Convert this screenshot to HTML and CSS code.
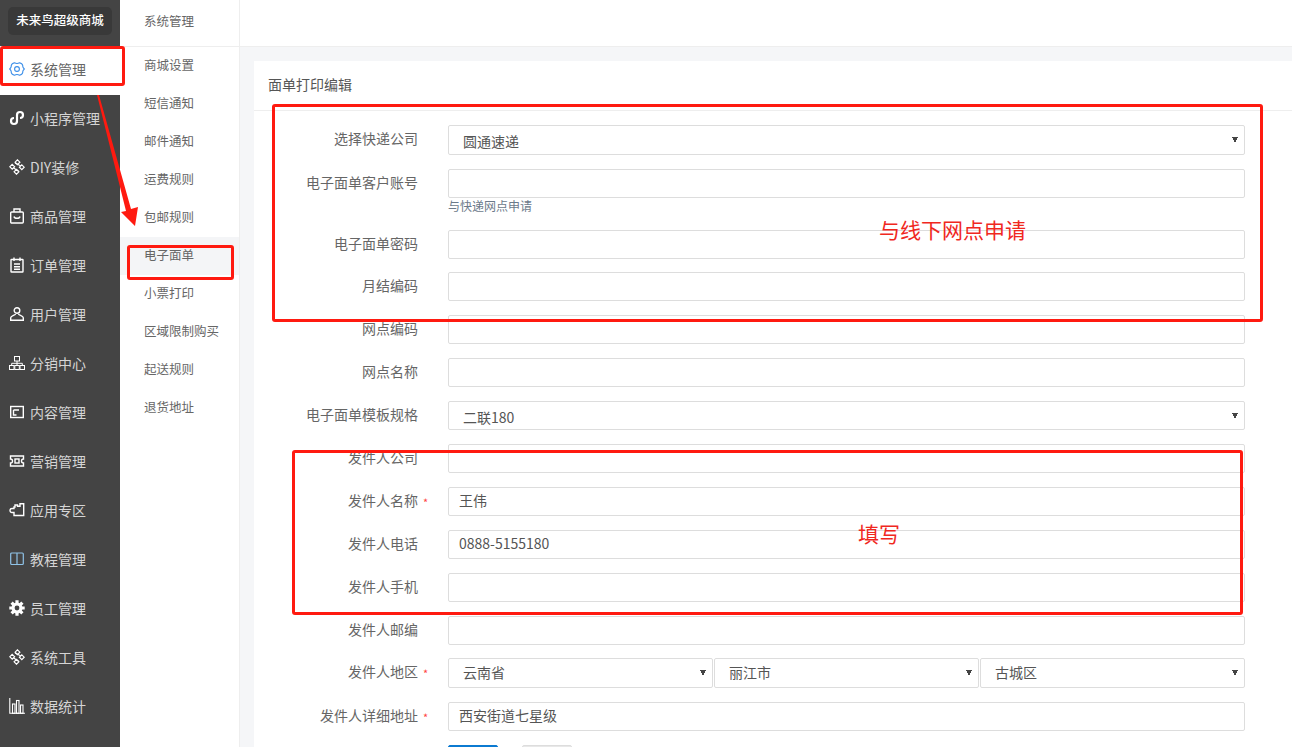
FILE: index.html
```html
<!DOCTYPE html>
<html lang="zh">
<head>
<meta charset="utf-8">
<title>面单打印编辑</title>
<link rel="stylesheet" href="styles.css">
</head>
<body>
<div class="app">
  <aside class="primary">
    <div class="logo-wrap"><div class="logo">未来鸟超级商城</div></div>
    <nav class="primary-nav">
      <a class="pitem active"><svg class="ico" viewBox="0 0 16 16"><g fill="none" stroke="#3b8ee8" stroke-width="1.100" stroke-linejoin="round"><path d="M5.500 1.800Q8 3.200 10.500 1.800 13.500 2.500 13.800 4.800 13.400 6 15.300 8 13.400 10 13.800 11.200 13.500 13.500 10.500 14.200 8 12.800 5.500 14.200 2.500 13.500 2.200 11.200 2.600 10 .7 8 2.600 6 2.200 4.800 2.500 2.500 5.500 1.800z"/><circle cx="8" cy="8" r="2.400"/></g></svg>系统管理</a>
      <a class="pitem"><svg class="ico" viewBox="0 0 16 16"><path d="M8 5v6a3 3 0 1 1-3-3M8 5a3 3 0 1 1 3 3" fill="none" stroke="#fff" stroke-width="2.200"/></svg>小程序管理</a>
      <a class="pitem"><svg class="ico" viewBox="0 0 16 16"><g fill="none" stroke="#fff" stroke-width="1.200"><path d="M8.500 .8l2.400 2.400-2.400 2.400-2.400-2.400z"/><path d="M3.200 5.300L5.600 7.700 3.200 10.100 .8 7.700z"/><path d="M12.800 5.800L15.200 8.200 12.800 10.600 10.400 8.200z"/><path d="M7.500 10.400l2.400 2.400-2.400 2.400-2.400-2.400z"/><path d="M6 4l6 3M4.500 9l5 3"/></g></svg>DIY装修</a>
      <a class="pitem"><svg class="ico" viewBox="0 0 16 16"><g fill="none" stroke="#fff" stroke-width="1.400"><rect x="1.700" y="4" width="12.600" height="11" rx="1"/><path d="M5 4V1h6V4M5 8.500c.5 2.300 5.500 2.300 6 0"/></g></svg>商品管理</a>
      <a class="pitem"><svg class="ico" viewBox="0 0 16 16"><g fill="none" stroke="#fff" stroke-width="1.400"><rect x="2" y="2.500" width="12" height="12.500" rx=".5"/><path d="M5 .5v3.500M11 .5v3.500M5 7h6M5 9.700h6M5 12.300h6"/></g></svg>订单管理</a>
      <a class="pitem"><svg class="ico" viewBox="0 0 16 16"><g fill="none" stroke="#fff" stroke-width="1.400"><circle cx="8" cy="4.500" r="2.800"/><path d="M6.500 8c0 1.300-4.800 1.700-4.800 3.700v2.600h12.600v-2.600C14.300 9.700 9.500 9.300 9.500 8"/></g></svg>用户管理</a>
      <a class="pitem"><svg class="ico" viewBox="0 0 16 16"><g fill="none" stroke="#fff" stroke-width="1"><rect x="5.500" y="1.500" width="5" height="4.500"/><rect x=".5" y="10.500" width="4.500" height="4"/><rect x="5.800" y="10.500" width="4.500" height="4"/><rect x="11" y="10.500" width="4.500" height="4"/><path d="M2.700 10.500V8.300h10.600v2.200M8 6v4.500"/></g></svg>分销中心</a>
      <a class="pitem"><svg class="ico" viewBox="0 0 16 16"><g fill="none" stroke="#fff" stroke-width="1.400"><rect x="1.700" y="2.500" width="12.600" height="11"/><path d="M4.500 6H10M4.500 6v5h3"/></g></svg>内容管理</a>
      <a class="pitem"><svg class="ico" viewBox="0 0 16 16"><g fill="none" stroke="#fff" stroke-width="1.400"><path d="M1.500 3h13v3c-1.600 0-2 1-2 2s.4 2 2 2v3h-13v-3c1.600 0 2-1 2-2s-.4-2-2-2z"/><rect x="6" y="6" width="4" height="4"/></g></svg>营销管理</a>
      <a class="pitem"><svg class="ico" viewBox="0 0 16 16"><path d="M6 5V3h2.500v1.200H11V1.800h3.700V13.500H5v-3H3a1.800 1.800 0 0 1 0-4h2V5z" fill="none" stroke="#fff" stroke-width="1.400"/></svg>应用专区</a>
      <a class="pitem"><svg class="ico" viewBox="0 0 16 16"><g fill="none" stroke="#8fc3e8" stroke-width="1.200"><rect x="1.700" y="2" width="12.600" height="11.500" rx="1"/><path d="M8 2v11.500"/></g></svg>教程管理</a>
      <a class="pitem"><svg class="ico" viewBox="0 0 16 16"><g stroke="#fff" stroke-width="3.200"><path d="M8 .3v15.400M.3 8h15.400M2.600 2.600l10.800 10.800M13.400 2.600L2.600 13.400"/></g><circle cx="8" cy="8" r="5.500" fill="#fff"/><circle cx="8" cy="8" r="2.400" fill="#444"/></svg>员工管理</a>
      <a class="pitem"><svg class="ico" viewBox="0 0 16 16"><g fill="none" stroke="#fff" stroke-width="1.200"><path d="M8.500 .8l2.400 2.400-2.400 2.400-2.400-2.400z"/><path d="M3.200 5.300L5.600 7.700 3.200 10.100 .8 7.700z"/><path d="M12.800 5.800L15.200 8.200 12.800 10.600 10.400 8.200z"/><path d="M7.500 10.400l2.400 2.400-2.400 2.400-2.400-2.400z"/><path d="M6 4l6 3M4.500 9l5 3"/></g></svg>系统工具</a>
      <a class="pitem"><svg class="ico" viewBox="0 0 16 16"><g fill="none" stroke="#fff" stroke-width="1.100"><path d="M.8 0v15.300H16"/><rect x="3.500" y="6" width="2.500" height="9.300"/><rect x="7.500" y="2.500" width="2.500" height="12.800"/><rect x="11.500" y="7" width="2.500" height="8.300"/></g></svg>数据统计</a>
    </nav>
  </aside>
  <aside class="secondary">
    <div class="sec-head">系统管理</div>
    <nav class="sec-nav">
      <a class="sitem">商城设置</a>
      <a class="sitem">短信通知</a>
      <a class="sitem">邮件通知</a>
      <a class="sitem">运费规则</a>
      <a class="sitem">包邮规则</a>
      <a class="sitem current">电子面单</a>
      <a class="sitem">小票打印</a>
      <a class="sitem">区域限制购买</a>
      <a class="sitem">起送规则</a>
      <a class="sitem">退货地址</a>
    </nav>
  </aside>
  <main class="main">
    <div class="topbar"></div>
    <div class="content">
      <section class="card">
        <h1 class="card-title">面单打印编辑</h1>
        <form class="form">
          <div class="row"><label class="lbl">选择快递公司</label><span></span><select class="ctl sel sel-tall"><option>圆通速递</option></select></div>
          <div class="row"><label class="lbl">电子面单客户账号</label><span></span><div class="stack"><input class="ctl" type="text"><div class="help">与快递网点申请</div></div></div>
          <div class="row row-tight"><label class="lbl">电子面单密码</label><span></span><input class="ctl" type="text"></div>
          <div class="row"><label class="lbl">月结编码</label><span></span><input class="ctl" type="text"></div>
          <div class="row"><label class="lbl">网点编码</label><span></span><input class="ctl" type="text"></div>
          <div class="row"><label class="lbl">网点名称</label><span></span><input class="ctl" type="text"></div>
          <div class="row"><label class="lbl">电子面单模板规格</label><span></span><select class="ctl sel"><option>二联180</option></select></div>
          <div class="row"><label class="lbl">发件人公司</label><span></span><input class="ctl" type="text"></div>
          <div class="row"><label class="lbl">发件人名称</label><span class="req">*</span><input class="ctl" type="text" value="王伟"></div>
          <div class="row"><label class="lbl">发件人电话</label><span></span><input class="ctl" type="text" value="0888-5155180"></div>
          <div class="row"><label class="lbl">发件人手机</label><span></span><input class="ctl" type="text"></div>
          <div class="row row-tight"><label class="lbl">发件人邮编</label><span></span><input class="ctl" type="text"></div>
          <div class="row"><label class="lbl">发件人地区</label><span class="req">*</span>
            <div class="group">
              <select class="ctl sel"><option>云南省</option></select>
              <select class="ctl sel"><option>丽江市</option></select>
              <select class="ctl sel"><option>古城区</option></select>
            </div>
          </div>
          <div class="row"><label class="lbl">发件人详细地址</label><span class="req">*</span><input class="ctl" type="text" value="西安街道七星级"></div>
          <div class="actions"><span></span><span></span><div class="btns"><button class="btn primary-btn" type="button" aria-label="保存"></button><button class="btn plain-btn" type="button" aria-label="返回"></button></div></div>
        </form>
      </section>
    </div>
  </main>

  <div class="mark mark-nav"></div>
  <div class="mark mark-sub"></div>
  <div class="mark mark-a"></div>
  <div class="mark mark-b"></div>
  <div class="note note-a">与线下网点申请</div>
  <div class="note note-b">填写</div>
  <svg class="arrow" width="50" height="135" viewBox="0 0 50 135"><path d="M1 0h2L35 114 42 112 39 131 25 117 30 116z" fill="#ff1a10"/></svg>
</div>
</body>
</html>
```
FILE: styles.css
```css
* { box-sizing: border-box; }
html, body { margin: 0; padding: 0; }
body {
  font-family: "Noto Sans CJK SC", "Liberation Sans", sans-serif;
  font-size: 14px;
  color: #555;
  overflow: hidden;
}
.app {
  position: relative;
  display: flex;
  width: 1292px;
  height: 747px;
  overflow: hidden;
}
.primary {
  flex: 0 0 120px;
  background: #444;
  display: flex;
  flex-direction: column;
}
.logo-wrap { height: 46px; padding: 7px 8px 0; }
.logo {
  height: 28px;
  line-height: 26px;
  border-radius: 5px;
  background: #393939;
  color: #fff;
  font-size: 12.5px;
  font-weight: 500;
  text-align: center;
}
.primary-nav { display: flex; flex-direction: column; }
.pitem {
  display: flex;
  align-items: center;
  gap: 5px;
  height: 49px;
  padding: 0 0 4px 9px;
  color: #d5d5d5;
  font-size: 14px;
  white-space: nowrap;
}
.pitem.active { background: #fff; color: #666; }
.ico { width: 16px; height: 16px; flex: none; }
.secondary {
  flex: 0 0 120px;
  background: #fff;
  border-right: 1px solid #eee;
}
.sec-head {
  height: 47px;
  padding: 11px 0 0 24px;
  font-size: 12.5px;
  line-height: 19px;
  border-bottom: 1px solid #eee;
  color: #666;
}
.sec-nav { display: flex; flex-direction: column; }
.sitem {
  height: 38px;
  line-height: 35px;
  padding-left: 24px;
  font-size: 12.5px;
  color: #666;
}
.sitem.current { background: #f4f5f7; }
.main {
  flex: 1;
  display: flex;
  flex-direction: column;
  min-width: 0;
  background: #f5f6f8;
}
.topbar {
  flex: none;
  height: 47px;
  background: #fff;
  border-bottom: 1px solid #eee;
}
.content { flex: 1; padding: 14px 0 0 14px; min-height: 0; }
.card { background: #fff; height: 100%; }
.card-title {
  margin: 0;
  height: 50px;
  padding: 12px 0 0 14px;
  font-size: 14px;
  line-height: 22px;
  font-weight: 400;
  color: #555;
  border-bottom: 1px solid #eee;
}
.form { padding-top: 14px; }
.row, .actions {
  display: grid;
  grid-template-columns: 150px 30px 797px;
  margin-left: 14px;
  margin-bottom: 14px;
}
.row-tight { margin-bottom: 13px; }
.actions { margin-bottom: 0; }
.row > span { padding: 6px 0 0 5px; }
.lbl {
  text-align: right;
  line-height: 27px;
  color: #666;
  height: 29px;
}
.req { color: #f44; font-size: 11px; line-height: 18px; }
.ctl {
  display: block;
  width: 100%;
  height: 29px;
  padding: 0 10px 3px;
  border: 1px solid #ddd;
  border-radius: 2px;
  background: #fff;
  color: #555;
  font: 14px "Noto Sans CJK SC", "Liberation Sans", sans-serif;
  outline: none;
}
.sel {
  appearance: none;
  padding: 3px 24px 0 14px;
  background-color: #fff;
  background-image:
    linear-gradient(to top right, transparent 50%, #444 50%),
    linear-gradient(to top left, transparent 50%, #444 50%);
  background-size: 3px 6px, 3px 6px;
  background-position: right 9px center, right 6px center;
  background-repeat: no-repeat;
}
.sel-tall { height: 30px; padding-top: 1px; }
.help {
  font-size: 12px;
  line-height: 15px;
  color: #6c7a8a;
  height: 18px;
}
.group { display: flex; gap: 1px; }
.group .ctl { flex: 1 1 0; min-width: 0; height: 30px; padding-top: 0; padding-bottom: 3px; }
.btns { display: flex; gap: 24px; }
.btn {
  width: 50px;
  height: 30px;
  border-radius: 2px;
  padding: 0;
}
.primary-btn { background: #0b7ad1; border: 1px solid #0b7ad1; }
.plain-btn { background: #e8e8e8; border: 1px solid #ddd; }
.mark {
  position: absolute;
  border: 3px solid #ff1a10;
  border-radius: 3px;
  pointer-events: none;
}
.mark-nav { left: 0; top: 46px; width: 125px; height: 40px; }
.mark-sub { left: 127px; top: 245px; width: 107px; height: 35px; }
.mark-a { left: 272px; top: 104px; width: 991px; height: 218px; }
.mark-b { left: 292px; top: 450px; width: 951px; height: 165px; }
.note {
  position: absolute;
  color: #f0281e;
  font-size: 21px;
  line-height: 28px;
  white-space: nowrap;
}
.note-a { left: 879px; top: 215px; }
.note-b { left: 858px; top: 519px; }
.arrow { position: absolute; left: 96px; top: 95px; }
```
